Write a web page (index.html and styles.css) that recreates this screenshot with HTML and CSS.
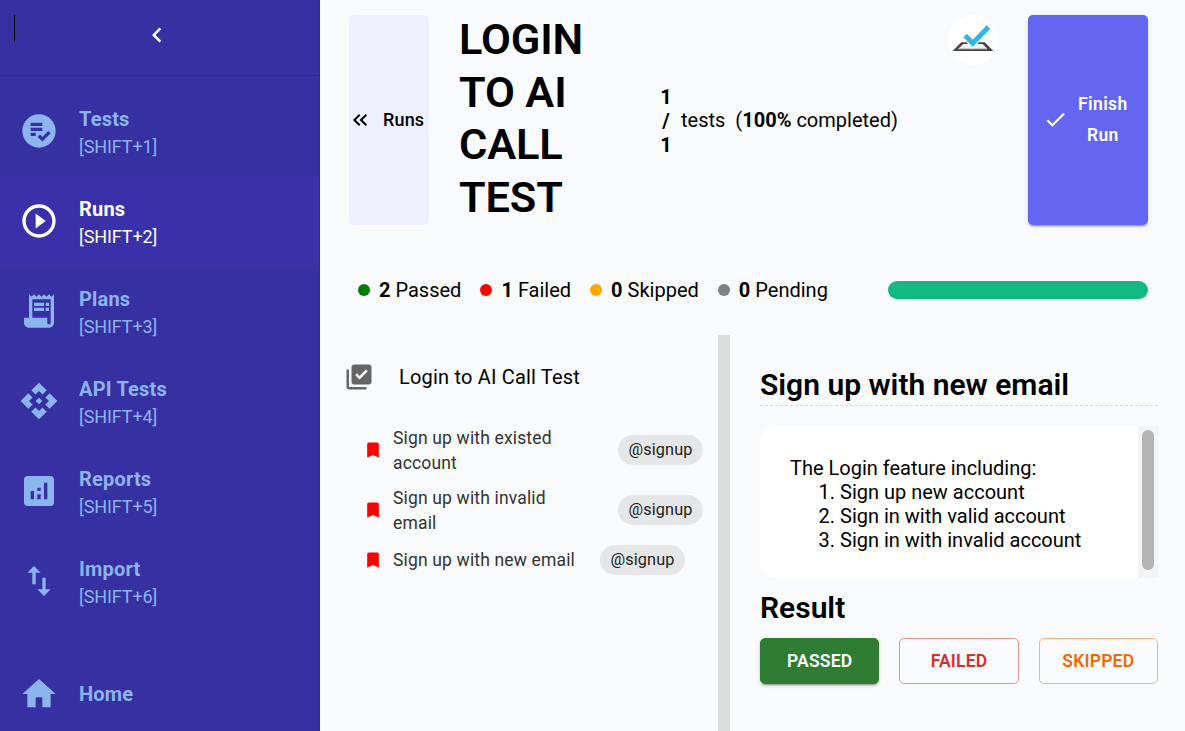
FILE: index.html
```html
<!DOCTYPE html>
<html lang="en">
<head>
<meta charset="utf-8">
<title>Login to AI Call Test</title>
<link rel="stylesheet" href="styles.css">
</head>
<body>
<div class="app">
  <aside class="sidebar">
    <div class="sidebar-top">
      <span class="caret"></span>
      <svg class="chevron" viewBox="0 0 24 24"><path d="M15.41 7.41 14 6l-6 6 6 6 1.41-1.41L10.83 12z"/></svg>
    </div>
    <nav class="nav">
      <a class="nav-item">
        <svg viewBox="0 0 24 24"><path d="M12 2C6.48 2 2 6.48 2 12s4.48 10 10 10 10-4.48 10-10S17.52 2 12 2zM7 7h7v2H7V7zm0 3h7v2H7v-2zm3 5H7v-2h3v2zm4.05 3.36-2.83-2.83 1.41-1.41 1.41 1.41L17.59 12 19 13.41l-4.95 4.95z"/></svg>
        <span class="nav-text"><b>Tests</b><span>[SHIFT+1]</span></span>
      </a>
      <a class="nav-item active">
        <svg viewBox="0 0 24 24"><path d="m10 16.5 6-4.5-6-4.5v9zM12 2C6.48 2 2 6.48 2 12s4.48 10 10 10 10-4.48 10-10S17.52 2 12 2zm0 18c-4.41 0-8-3.59-8-8s3.59-8 8-8 8 3.59 8 8-3.59 8-8 8z"/></svg>
        <span class="nav-text"><b>Runs</b><span>[SHIFT+2]</span></span>
      </a>
      <a class="nav-item">
        <svg viewBox="0 0 24 24"><path d="M19.5 3.5 18 2l-1.5 1.5L15 2l-1.5 1.5L12 2l-1.5 1.5L9 2 7.5 3.5 6 2v14H3v3c0 1.66 1.34 3 3 3h12c1.66 0 3-1.34 3-3V2l-1.5 1.5zM19 19c0 .55-.45 1-1 1s-1-.45-1-1v-3H8V5h11v14z"/><path d="M9 7h6v2H9zM16 7h2v2h-2zM9 10h6v2H9zM16 10h2v2h-2z"/></svg>
        <span class="nav-text"><b>Plans</b><span>[SHIFT+3]</span></span>
      </a>
      <a class="nav-item">
        <svg viewBox="0 0 24 24"><path d="m14 12-2 2-2-2 2-2 2 2zm-2-6 2.12 2.12 2.5-2.5L12 1 7.38 5.62l2.5 2.5L12 6zm-6 6 2.12-2.12-2.5-2.5L1 12l4.62 4.62 2.5-2.5L6 12zm12 0-2.12 2.12 2.5 2.5L23 12l-4.62-4.62-2.5 2.5L18 12zm-6 6-2.12-2.12-2.5 2.5L12 23l4.62-4.62-2.5-2.5L12 18z"/></svg>
        <span class="nav-text"><b>API Tests</b><span>[SHIFT+4]</span></span>
      </a>
      <a class="nav-item">
        <svg viewBox="0 0 24 24"><path d="M19 3H5c-1.1 0-2 .9-2 2v14c0 1.1.9 2 2 2h14c1.1 0 2-.9 2-2V5c0-1.1-.9-2-2-2zM9 17H7v-5h2v5zm4 0h-2v-3h2v3zm0-5h-2v-2h2v2zm4 5h-2V7h2v10z"/></svg>
        <span class="nav-text"><b>Reports</b><span>[SHIFT+5]</span></span>
      </a>
      <a class="nav-item">
        <svg viewBox="0 0 24 24"><path d="M9 3 5 6.99h3V14h2V6.99h3L9 3zm7 14.01V10h-2v7.01h-3L15 21l4-3.99h-3z"/></svg>
        <span class="nav-text"><b>Import</b><span>[SHIFT+6]</span></span>
      </a>
      <a class="nav-item home">
        <svg viewBox="0 0 24 24"><path d="M10 20v-6h4v6h5v-8h3L12 3 2 12h3v8z"/></svg>
        <span class="nav-text"><b>Home</b></span>
      </a>
    </nav>
  </aside>

  <main class="main">
    <header class="header">
      <button class="back">
        <svg viewBox="0 0 24 24"><path d="M17.59 18 19 16.59 14.42 12 19 7.41 17.59 6l-6 6z"/><path d="m11 18 1.41-1.41L7.83 12l4.58-4.59L11 6l-6 6z"/></svg>
        <span>Runs</span>
      </button>
      <h1 class="title">LOGIN TO AI CALL TEST</h1>
      <div class="progress-text">
        <b class="count">1<br>/<br>1</b>
        <span>tests</span>
        <span class="completed">(<b>100%</b> completed)</span>
      </div>
      <svg class="avatar" viewBox="0 0 50 50">
        <circle cx="25" cy="25" r="25" fill="#fff"/>
        <path d="M13.2 27.2H36.8L45.3 36H4.7z" fill="#444"/>
        <path d="M15.2 29H34.6L39.2 33.8H10.4z" fill="#fff"/>
        <path d="M11.2 32.8H38.4L39.6 34.2H9.8z" fill="#ccc"/>
        <path d="M17.2 20.6 24.7 28.4 40.3 12.2" fill="none" stroke="#fff" stroke-width="7.4"/>
        <path d="M17.2 20.4 24.7 28.2 40.5 12" fill="none" stroke="#35b4e5" stroke-width="5"/>
      </svg>
      <button class="finish">
        <svg viewBox="0 0 24 24"><path d="M9 16.17 4.83 12l-1.42 1.41L9 19 21 7l-1.41-1.41z"/></svg>
        <span>Finish<br>Run</span>
      </button>
    </header>

    <section class="stats">
      <div class="stat"><i class="dot passed"></i><b>2</b> Passed</div>
      <div class="stat"><i class="dot failed"></i><b>1</b> Failed</div>
      <div class="stat"><i class="dot skipped"></i><b>0</b> Skipped</div>
      <div class="stat"><i class="dot pending"></i><b>0</b> Pending</div>
      <div class="bar"></div>
    </section>

    <div class="panes">
      <section class="tree">
        <div class="suite">
          <svg viewBox="0 0 24 24"><path d="M20 2H8c-1.1 0-2 .9-2 2v12c0 1.1.9 2 2 2h12c1.1 0 2-.9 2-2V4c0-1.1-.9-2-2-2zm-7.53 12L9 10.5l1.4-1.41 2.07 2.08L17.6 6 19 7.41 12.47 14zM4 6H2v14c0 1.1.9 2 2 2h14v-2H4V6z"/></svg>
          <span>Login to AI Call Test</span>
        </div>
        <div class="case">
          <svg viewBox="0 0 24 24"><path d="M17 3H7c-1.1 0-1.99.9-1.99 2L5 21l7-3 7 3V5c0-1.1-.9-2-2-2z"/></svg>
          <span class="case-name">Sign up with existed<br>account</span>
          <span class="tag">@signup</span>
        </div>
        <div class="case">
          <svg viewBox="0 0 24 24"><path d="M17 3H7c-1.1 0-1.99.9-1.99 2L5 21l7-3 7 3V5c0-1.1-.9-2-2-2z"/></svg>
          <span class="case-name">Sign up with invalid<br>email</span>
          <span class="tag">@signup</span>
        </div>
        <div class="case single">
          <svg viewBox="0 0 24 24"><path d="M17 3H7c-1.1 0-1.99.9-1.99 2L5 21l7-3 7 3V5c0-1.1-.9-2-2-2z"/></svg>
          <span class="case-name">Sign up with new email</span>
          <span class="tag">@signup</span>
        </div>
      </section>
      <div class="divider"></div>
      <section class="detail">
        <h2 class="detail-title">Sign up with new email</h2>
        <div class="desc">
          <div class="desc-body">
            <p>The Login feature including:</p>
            <ol>
              <li>Sign up new account</li>
              <li>Sign in with valid account</li>
              <li>Sign in with invalid account</li>
            </ol>
          </div>
          <div class="scroll"><div class="thumb"></div></div>
        </div>
        <h2 class="result-title">Result</h2>
        <div class="results">
          <button class="result is-passed">PASSED</button>
          <button class="result is-failed">FAILED</button>
          <button class="result is-skipped">SKIPPED</button>
        </div>
      </section>
    </div>
  </main>
</div>
</body>
</html>
```
FILE: styles.css
```css
* { box-sizing: border-box; }
body {
  margin: 0;
  background: #f9fafc;
  font: 400 20px/24px Roboto, sans-serif;
  color: #000;
  overflow: hidden;
}
h1, h2, p, ol { margin: 0; padding: 0; }
b { font-weight: 700; }
svg { fill: currentColor; flex: none; display: block; }
button { border: 0; margin: 0; padding: 0; font: inherit; color: inherit; }

.app { display: flex; width: 1185px; height: 731px; }

/* Sidebar */
.sidebar {
  width: 320px;
  flex: none;
  background: #3730a3;
  border-right: 1px solid #312b91;
  color: #8cb4ee;
}
.sidebar-top {
  height: 76px;
  display: flex;
  align-items: flex-start;
  border-bottom: 1px solid #312b91;
  padding: 15px 0 0 14px;
}
.caret { width: 1px; height: 27px; background: #000; }
.chevron { width: 30px; height: 30px; margin: 5px 0 0 127px; color: #fff; }
.nav { padding-top: 10px; }
.nav-item { display: flex; align-items: center; height: 90px; padding-left: 19px; gap: 20px; }
.nav-item svg { width: 40px; height: 40px; }
.nav-item.active { background: #3930aa; color: #fff; }
.nav-text { display: flex; flex-direction: column; }
.nav-text b { line-height: 30px; margin-top: 1px; letter-spacing: .19px; }
.nav-text span { font-size: 18px; line-height: 26px; letter-spacing: -.1px; }
.home { margin-top: 23px; }
.home .nav-text b { margin-top: 0; }

/* Main column */
.main { flex: 1; min-width: 0; display: flex; flex-direction: column; }
.header { display: flex; height: 225px; padding: 15px 37px 0 29px; }
.back {
  width: 80px;
  border-radius: 5px;
  background: #edf1fe;
  display: flex;
  align-items: center;
  font-size: 18px;
  font-weight: 500;
}
.back svg { width: 24px; height: 24px; margin: 0 11px 0 -1px; }
.back span { letter-spacing: .15px; }
.title {
  width: 150px;
  height: 210px;
  margin: -1px 0 0 30px;
  font-size: 43.4px;
  font-weight: 600;
  line-height: 52.5px;
  letter-spacing: -.15px;
}
.progress-text { display: flex; align-items: center; margin-left: 51px; width: 288px; white-space: nowrap; }
.count { width: 12px; margin: 1px 9px 0 0; text-align: center; }
.completed { margin-left: 10px; }
.avatar { width: 50px; height: 50px; }
.finish {
  width: 120px;
  margin-left: auto;
  border-radius: 5px;
  background: #6366f1;
  color: #fff;
  display: flex;
  align-items: center;
  font-size: 17.5px;
  font-weight: 600;
  line-height: 31px;
  letter-spacing: .4px;
  box-shadow: 0 3px 1px -2px rgba(0,0,0,.2), 0 2px 2px rgba(0,0,0,.14), 0 1px 5px rgba(0,0,0,.12);
}
.finish svg { width: 25px; height: 25px; margin: 0 10px 2px 15px; }

.stats { display: flex; align-items: center; height: 110px; padding: 20px 37px 0 38px; gap: 19px; }
.stat { display: flex; align-items: center; gap: 5px; white-space: nowrap; }
.dot { width: 12px; height: 12px; border-radius: 50%; margin-right: 4px; }
.dot.passed { background: #008000; }
.dot.failed { background: #f00; }
.dot.skipped { background: #ffa500; }
.dot.pending { background: #808080; }
.bar { width: 260px; height: 18px; border-radius: 9px; background: #12b981; margin-left: auto; }

.panes { flex: 1; display: flex; min-height: 0; }
.tree { width: 398px; padding: 24px 0 0 24px; }
.suite { display: flex; align-items: center; height: 36px; gap: 25px; margin-bottom: 30px; letter-spacing: .19px; }
.suite svg { width: 30px; height: 30px; color: #666; }
.case { display: flex; align-items: center; height: 50px; margin-bottom: 10px; padding-left: 19px; }
.case svg { width: 20px; height: 20px; color: #f00; }
.case-name {
  width: 225px;
  padding: 1px 0 0 10px;
  font-size: 17.5px;
  line-height: 25px;
  letter-spacing: .16px;
  color: #333;
  white-space: nowrap;
}
.case.single { height: 30px; }
.single .case-name { width: 207px; padding-top: 0; }
.tag {
  width: 85px;
  height: 30px;
  margin-left: 10px;
  border-radius: 15px;
  background: #e5e6e8;
  color: #212121;
  font-size: 16.25px;
  line-height: 30px;
  letter-spacing: .15px;
  text-align: center;
}
.divider { width: 12px; background: #dbdddc; }
.detail { flex: 1; padding: 30px 27px 0 30px; }
.detail-title, .result-title { font-size: 30px; font-weight: 600; line-height: 40px; }
.detail-title { height: 41px; border-bottom: 1px dashed #d9dadc; }
.desc { display: flex; height: 152px; margin-top: 20px; }
.desc-body { flex: 1; padding: 30px; background: #fff; border-radius: 15px 0 0 15px; }
.desc-body ol { padding-left: 50px; }
.scroll { width: 20px; padding: 4px; background: #f4f4f4; }
.thumb { height: 140px; border-radius: 6px; background: #b5b5b5; }
.result-title { margin-top: 10px; }
.results { display: grid; grid-template-columns: repeat(3, 1fr); gap: 20px; margin-top: 10px; }
.result {
  height: 46px;
  border: 1px solid;
  border-radius: 5px;
  background: transparent;
  font-size: 17.5px;
  font-weight: 600;
  letter-spacing: .2px;
}
.is-passed {
  background: #2e7d32;
  border-color: #2e7d32;
  color: #fff;
  box-shadow: 0 3px 1px -2px rgba(0,0,0,.2), 0 2px 2px rgba(0,0,0,.14), 0 1px 5px rgba(0,0,0,.12);
}
.is-failed { color: #d32f2f; border-color: #e69194; }
.is-skipped { color: #ed6c02; border-color: #f4b37e; }
```
